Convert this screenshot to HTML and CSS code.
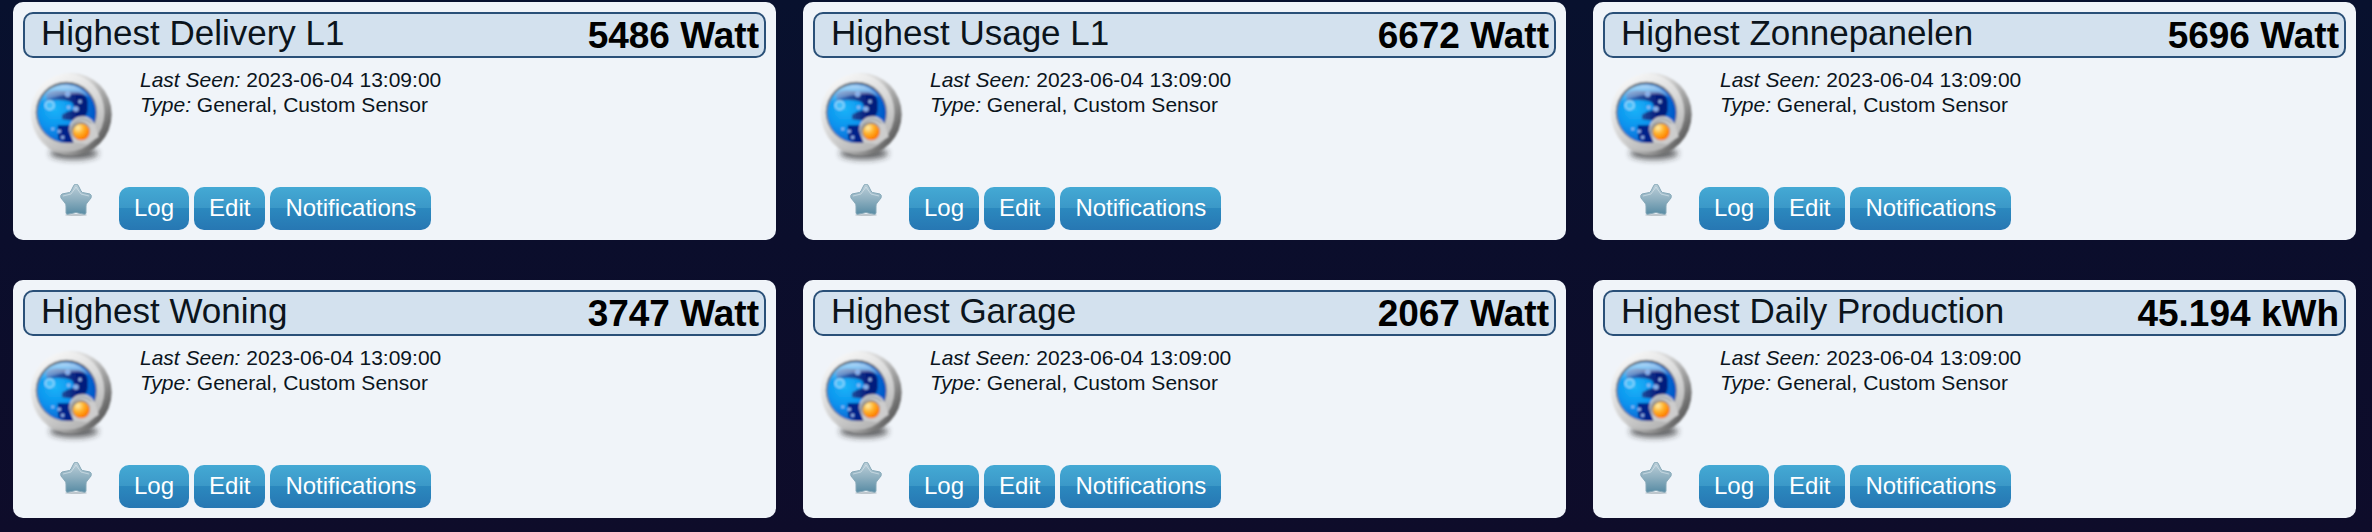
FILE: index.html
```
<!DOCTYPE html>
<html lang="en">
<head>
<meta charset="utf-8">
<meta name="viewport" content="width=device-width, initial-scale=1">
<title>Utility</title>
<link rel="stylesheet" href="styles.css">
</head>
<body>
<svg class="defs" width="0" height="0" aria-hidden="true">
  <defs>
    <linearGradient id="rim" x1="0.1" y1="0.15" x2="0.95" y2="0.75">
      <stop offset="0" stop-color="#ffffff"/><stop offset="0.45" stop-color="#d4d4d4"/><stop offset="0.8" stop-color="#8e8e8e"/><stop offset="1" stop-color="#5a5a5a"/>
    </linearGradient>
    <linearGradient id="face" x1="0.2" y1="0" x2="0.75" y2="1">
      <stop offset="0" stop-color="#fafafa"/><stop offset="0.5" stop-color="#dadada"/><stop offset="1" stop-color="#b0b0b0"/>
    </linearGradient>
    <radialGradient id="glass" cx="0.3" cy="0.42" r="0.72">
      <stop offset="0" stop-color="#1cb4f8"/><stop offset="0.45" stop-color="#0a93ee"/><stop offset="1" stop-color="#0450c4"/>
    </radialGradient>
    <linearGradient id="mark" x1="0" y1="0" x2="1" y2="0">
      <stop offset="0" stop-color="#3c7cc8"/><stop offset="0.45" stop-color="#1c4494"/><stop offset="0.75" stop-color="#041c7c"/>
    </linearGradient>
    <linearGradient id="gloss" x1="0" y1="0" x2="0" y2="1">
      <stop offset="0" stop-color="#fff" stop-opacity="0.7"/><stop offset="1" stop-color="#fff" stop-opacity="0"/>
    </linearGradient>
    <radialGradient id="amber" cx="0.3" cy="0.25" r="0.85">
      <stop offset="0" stop-color="#fff0b0"/><stop offset="0.4" stop-color="#ffb42c"/><stop offset="0.8" stop-color="#ff8200"/><stop offset="1" stop-color="#e86c00"/>
    </radialGradient>
    <linearGradient id="steel" x1="0" y1="0" x2="0" y2="1">
      <stop offset="0" stop-color="#bdd0da"/><stop offset="0.5" stop-color="#8fb0c0"/><stop offset="1" stop-color="#588ba4"/>
    </linearGradient>
    <filter id="soft" x="-30%" y="-80%" width="160%" height="260%"><feGaussianBlur stdDeviation="9"/></filter>
    <filter id="edge" x="-10%" y="-10%" width="120%" height="120%"><feGaussianBlur stdDeviation="3"/></filter>
  </defs>
  <symbol id="sensor" viewBox="9 0 330 330">
    <ellipse cx="162" cy="280" rx="72" ry="18" fill="#222" opacity="0.7" filter="url(#soft)"/>
    <g filter="url(#edge)">
      <ellipse cx="154" cy="163" rx="121" ry="124" fill="url(#rim)"/>
      <ellipse cx="143" cy="158" rx="110" ry="117" fill="url(#face)"/>
      <circle cx="139" cy="157" r="92" fill="#6c747c"/>
      <circle cx="140" cy="160" r="88" fill="url(#glass)"/>
      <path d="M78 104Q88 90 118 92L176 96Q198 102 203 122V150Q202 168 184 178Q160 184 126 178V164Q140 154 160 150Q166 138 154 126Q132 116 80 122Z" fill="url(#mark)"/>
      <path d="M113 196H160V248H142Q122 244 115 236Z" fill="#04208a"/>
      <path d="M60 130Q76 74 140 74Q186 76 208 112Q190 98 140 104Q90 110 60 130Z" fill="url(#gloss)"/>
      <circle cx="89" cy="136" r="13" fill="#6fd2ff" fill-opacity="0.5" stroke="#a3e0ff" stroke-width="4"/>
      <g fill="#7fa9e8" stroke="#c0dcff" stroke-width="2">
        <circle cx="143" cy="103" r="7"/><circle cx="168" cy="147" r="7"/><circle cx="180" cy="125" r="4"/>
        <circle cx="146" cy="142" r="4"/><circle cx="118" cy="214" r="4"/><circle cx="128" cy="232" r="4"/><circle cx="98" cy="207" r="3"/>
      </g>
      <path d="M148 214A40 40 0 0 1 224 192L236 230L200 252L160 246Z" fill="#cdcdcd"/>
      <path d="M152 222A36 36 0 0 1 214 190" fill="none" stroke="#929ca6" stroke-width="4"/>
      <circle cx="182" cy="213" r="28" fill="#8c8580"/>
      <circle cx="184" cy="216" r="25" fill="url(#amber)"/>
    </g>
  </symbol>
  <symbol id="star" viewBox="0 0 32 32">
    <ellipse cx="16" cy="31" rx="11" ry="1" fill="#8a98a0" opacity="0.5"/>
    <path d="M16 0Q18 0 19 3L21 7Q22 9 25 9L30 10Q32 11 31 14L27 19Q26 20 26 22V29Q26 31 23 30L18 29Q16 28 14 29L9 30Q6 31 6 29V22Q6 20 5 19L1 14Q0 11 2 10L7 9Q10 9 11 7L13 3Q14 0 16 0Z" fill="url(#steel)" stroke="#86a8b8"/>
    <path d="M3 12L11 10L16 3L21 10L29 12" fill="none" stroke="#dce8ee" stroke-opacity="0.6"/>
  </symbol>
</svg>
<main class="devices">
  <article class="card">
    <header class="card-head"><h2 class="name">Highest Delivery L1</h2><strong class="value">5486 Watt</strong></header>
    <div class="info"><svg class="sensor" role="img" aria-label="Custom sensor"><use href="#sensor"/></svg><p class="meta"><em>Last Seen:</em> 2023-06-04 13:09:00<br><em>Type:</em> General, Custom Sensor</p></div>
    <footer class="actions"><button class="favorite" type="button" aria-label="Add to favorites"><svg class="star"><use href="#star"/></svg></button><div class="buttons"><button class="btn" type="button">Log</button><button class="btn" type="button">Edit</button><button class="btn" type="button">Notifications</button></div></footer>
  </article>
  <article class="card">
    <header class="card-head"><h2 class="name">Highest Usage L1</h2><strong class="value">6672 Watt</strong></header>
    <div class="info"><svg class="sensor" role="img" aria-label="Custom sensor"><use href="#sensor"/></svg><p class="meta"><em>Last Seen:</em> 2023-06-04 13:09:00<br><em>Type:</em> General, Custom Sensor</p></div>
    <footer class="actions"><button class="favorite" type="button" aria-label="Add to favorites"><svg class="star"><use href="#star"/></svg></button><div class="buttons"><button class="btn" type="button">Log</button><button class="btn" type="button">Edit</button><button class="btn" type="button">Notifications</button></div></footer>
  </article>
  <article class="card">
    <header class="card-head"><h2 class="name">Highest Zonnepanelen</h2><strong class="value">5696 Watt</strong></header>
    <div class="info"><svg class="sensor" role="img" aria-label="Custom sensor"><use href="#sensor"/></svg><p class="meta"><em>Last Seen:</em> 2023-06-04 13:09:00<br><em>Type:</em> General, Custom Sensor</p></div>
    <footer class="actions"><button class="favorite" type="button" aria-label="Add to favorites"><svg class="star"><use href="#star"/></svg></button><div class="buttons"><button class="btn" type="button">Log</button><button class="btn" type="button">Edit</button><button class="btn" type="button">Notifications</button></div></footer>
  </article>
  <article class="card">
    <header class="card-head"><h2 class="name">Highest Woning</h2><strong class="value">3747 Watt</strong></header>
    <div class="info"><svg class="sensor" role="img" aria-label="Custom sensor"><use href="#sensor"/></svg><p class="meta"><em>Last Seen:</em> 2023-06-04 13:09:00<br><em>Type:</em> General, Custom Sensor</p></div>
    <footer class="actions"><button class="favorite" type="button" aria-label="Add to favorites"><svg class="star"><use href="#star"/></svg></button><div class="buttons"><button class="btn" type="button">Log</button><button class="btn" type="button">Edit</button><button class="btn" type="button">Notifications</button></div></footer>
  </article>
  <article class="card">
    <header class="card-head"><h2 class="name">Highest Garage</h2><strong class="value">2067 Watt</strong></header>
    <div class="info"><svg class="sensor" role="img" aria-label="Custom sensor"><use href="#sensor"/></svg><p class="meta"><em>Last Seen:</em> 2023-06-04 13:09:00<br><em>Type:</em> General, Custom Sensor</p></div>
    <footer class="actions"><button class="favorite" type="button" aria-label="Add to favorites"><svg class="star"><use href="#star"/></svg></button><div class="buttons"><button class="btn" type="button">Log</button><button class="btn" type="button">Edit</button><button class="btn" type="button">Notifications</button></div></footer>
  </article>
  <article class="card">
    <header class="card-head"><h2 class="name">Highest Daily Production</h2><strong class="value">45.194 kWh</strong></header>
    <div class="info"><svg class="sensor" role="img" aria-label="Custom sensor"><use href="#sensor"/></svg><p class="meta"><em>Last Seen:</em> 2023-06-04 13:09:00<br><em>Type:</em> General, Custom Sensor</p></div>
    <footer class="actions"><button class="favorite" type="button" aria-label="Add to favorites"><svg class="star"><use href="#star"/></svg></button><div class="buttons"><button class="btn" type="button">Log</button><button class="btn" type="button">Edit</button><button class="btn" type="button">Notifications</button></div></footer>
  </article>
</main>
</body>
</html>
```
FILE: styles.css
```
* {
  box-sizing: border-box;
}

html {
  min-height: 100%;
  background: linear-gradient(#08112e, #0b0e2c 45%, #0e0c2a);
}

body {
  margin: 0;
  font-family: "Liberation Sans", Arial, sans-serif;
  color: #0b141c;
}

.defs {
  position: absolute;
}

.devices {
  display: grid;
  grid-template-columns: repeat(3, 1fr);
  gap: 40px 27px;
  padding: 2px 16px 14px 13px;
}

.card {
  padding: 10px;
  border-radius: 10px;
  background: #f0f4f9;
}

.card-head {
  display: flex;
  justify-content: space-between;
  padding: 0 5px 0 16px;
  border: 2px solid #2a5078;
  border-radius: 10px;
  background: #d3e1ee;
}

.name {
  margin: 0;
  font-size: 35px;
  font-weight: 400;
  line-height: 38px;
}

.value {
  padding-top: 2px;
  font-size: 37px;
  line-height: 40px;
  color: #000;
}

.info {
  display: flex;
  gap: 7px;
  padding-top: 2px;
}

.sensor {
  width: 110px;
  height: 110px;
}

.meta {
  margin: 0;
  padding-top: 7px;
  font-size: 21px;
  line-height: 25px;
}

.actions {
  display: flex;
  align-items: flex-start;
  gap: 27px;
  padding: 14px 0 0 37px;
}

.favorite {
  padding: 0;
  border: 0;
  background: none;
}

.star {
  display: block;
  width: 32px;
  height: 32px;
}

.buttons {
  display: flex;
  gap: 5px;
  padding-top: 3px;
}

.btn {
  padding: 0 15px 2px;
  border: 0;
  border-radius: 10px;
  background: linear-gradient(#44a9d4, #3b98c8 49%, #2b88be 50%, #2777b3);
  color: #fff;
  font: 24px/41px "Liberation Sans", Arial, sans-serif;
}
```
